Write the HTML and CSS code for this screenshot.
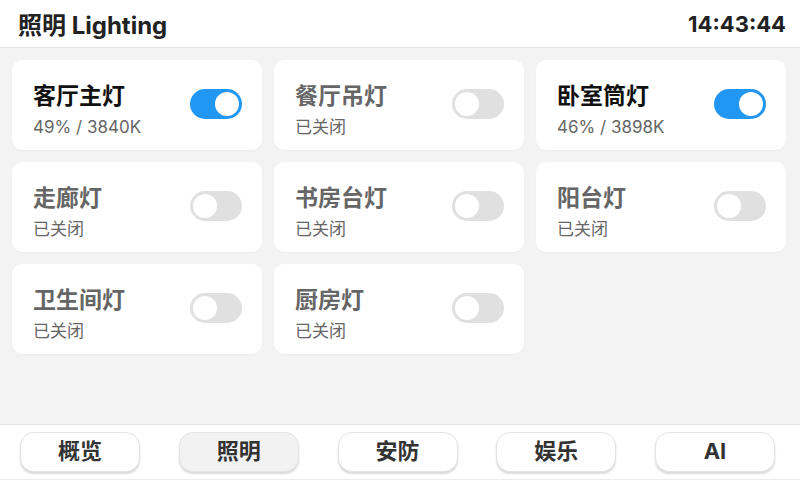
FILE: index.html
```html
<!DOCTYPE html>
<html lang="zh-CN">
<head>
    <meta charset="UTF-8" />
    <title>照明 Lighting</title>
    <link rel="stylesheet" href="styles.css">
</head>
<body>
    <div class="screen">
        <div class="top-bar">
            <span class="top-title">照明 Lighting</span>
            <span class="top-clock">14:43:44</span>
        </div>

        <div class="light-grid">
            <div class="light-card on">
                <div class="light-info">
                    <span class="light-name">客厅主灯</span>
                    <span class="light-state">49% / 3840K</span>
                </div>
                <div class="switch"><div class="knob"></div></div>
            </div>
            <div class="light-card">
                <div class="light-info">
                    <span class="light-name">餐厅吊灯</span>
                    <span class="light-state">已关闭</span>
                </div>
                <div class="switch"><div class="knob"></div></div>
            </div>
            <div class="light-card on">
                <div class="light-info">
                    <span class="light-name">卧室筒灯</span>
                    <span class="light-state">46% / 3898K</span>
                </div>
                <div class="switch"><div class="knob"></div></div>
            </div>
            <div class="light-card">
                <div class="light-info">
                    <span class="light-name">走廊灯</span>
                    <span class="light-state">已关闭</span>
                </div>
                <div class="switch"><div class="knob"></div></div>
            </div>
            <div class="light-card">
                <div class="light-info">
                    <span class="light-name">书房台灯</span>
                    <span class="light-state">已关闭</span>
                </div>
                <div class="switch"><div class="knob"></div></div>
            </div>
            <div class="light-card">
                <div class="light-info">
                    <span class="light-name">阳台灯</span>
                    <span class="light-state">已关闭</span>
                </div>
                <div class="switch"><div class="knob"></div></div>
            </div>
            <div class="light-card">
                <div class="light-info">
                    <span class="light-name">卫生间灯</span>
                    <span class="light-state">已关闭</span>
                </div>
                <div class="switch"><div class="knob"></div></div>
            </div>
            <div class="light-card">
                <div class="light-info">
                    <span class="light-name">厨房灯</span>
                    <span class="light-state">已关闭</span>
                </div>
                <div class="switch"><div class="knob"></div></div>
            </div>
        </div>

        <div class="nav-bar">
            <button class="nav-btn">概览</button>
            <button class="nav-btn active">照明</button>
            <button class="nav-btn">安防</button>
            <button class="nav-btn">娱乐</button>
            <button class="nav-btn">AI</button>
        </div>
    </div>
</body>
</html>
```

FILE: styles.css
```css
body {
    margin: 0;
    padding: 0;
    font-family: Inter, "Noto Sans CJK SC", sans-serif;
    background-color: #f3f3f3;
    color: #1a1a1a;
}

.screen {
    width: 800px;
    height: 480px;
    display: flex;
    flex-direction: column;
    overflow: hidden;
}

.top-bar {
    height: 48px;
    box-sizing: border-box;
    display: flex;
    align-items: center;
    justify-content: space-between;
    padding: 0 14px 0 18px;
    background-color: #fff;
    border-bottom: 1px solid #e6e6e6;
}

.top-title {
    font-size: 24px;
    font-weight: bold;
    color: #222;
}

.top-clock {
    font-size: 22px;
    font-weight: bold;
    color: #222;
}

.light-grid {
    flex: 1;
    display: grid;
    grid-template-columns: repeat(3, 250px);
    grid-auto-rows: 90px;
    gap: 12px;
    padding: 12px;
    align-content: start;
}

.light-card {
    background-color: #fff;
    border-radius: 10px;
    display: flex;
    align-items: center;
    justify-content: space-between;
    padding: 0 20px 0 21px;
    box-shadow: 0 1px 2px rgba(0,0,0,0.03);
}

.light-info {
    display: flex;
    flex-direction: column;
    padding-top: 8px;
}

.light-name {
    font-size: 23px;
    font-weight: bold;
    line-height: 30px;
    color: #666;
}

.light-card.on .light-name {
    color: #111;
}

.light-state {
    font-size: 17px;
    line-height: 22px;
    margin-top: 5px;
    color: #666;
}

.switch {
    width: 52px;
    height: 30px;
    border-radius: 15px;
    background-color: #e0e0e0;
    position: relative;
    margin-top: -2px;
}

.knob {
    position: absolute;
    top: 3px;
    left: 3px;
    width: 24px;
    height: 24px;
    border-radius: 50%;
    background-color: #fff;
}

.light-card.on .switch {
    background-color: #2196f3;
}

.light-card.on .knob {
    left: 25px;
}

.nav-bar {
    height: 56px;
    box-sizing: border-box;
    background-color: #fff;
    border-top: 1px solid #e6e6e6;
    border-bottom: 1px solid #ececec;
    display: flex;
    align-items: center;
    justify-content: space-between;
    padding: 0 25px 0 20px;
}

.nav-btn {
    width: 120px;
    height: 40px;
    border: 1px solid #e4e4e4;
    border-radius: 14px;
    background-color: #fff;
    box-shadow: 0 2px 2px rgba(0,0,0,0.15);
    font-family: Inter, "Noto Sans CJK SC", sans-serif;
    font-size: 22px;
    line-height: 1;
    font-weight: bold;
    color: #333;
    padding: 0 0 2px;
}

.nav-btn.active {
    background-color: #f2f2f2;
}
```
